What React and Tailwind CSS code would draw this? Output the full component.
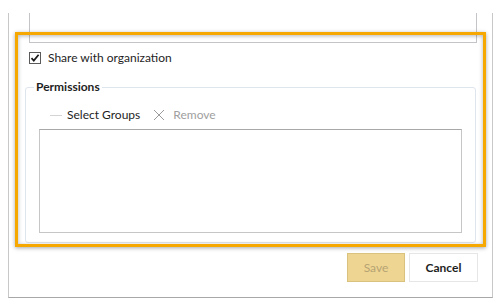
export default function App() {
  const font = { fontFamily: 'Lato, "Noto Sans", sans-serif' };
  return (
    <div className="relative w-[503px] h-[307px] bg-white overflow-hidden" style={font}>
      <div className="ml-[8px] mt-[13px] w-[485px] h-[285px] border-x border-b border-x-[#c8c8c8] border-b-[#a8a8a8] flex flex-col">
        <div className="ml-[20px] w-[448px] h-[30px] shrink-0 border-x border-b border-[#c4c4c8]" />
        <div className="flex items-center h-[16px] mt-[7px] pl-[20px] gap-[7px]">
          <svg width="12" height="12" viewBox="0 0 12 12" className="shrink-0">
            <rect x="0.5" y="0.5" width="11" height="11" fill="#fff" stroke="#5a5a5a" />
            <path d="M2.5 6.2 L4.8 8.6 L9.6 2.8" fill="none" stroke="#1a1a1a" strokeWidth="1.7" />
          </svg>
          <span className="text-[12px] leading-[16px] text-[#1e1e1e]">Share with organization</span>
        </div>
        <fieldset className="ml-[16px] mt-[12px] w-[451px] border border-[#dfe5ec] rounded-[3px] pl-[8px] pb-[9px]">
          <legend className="px-[2px] text-[12px] leading-[18px] font-bold text-[#1e1e1e]">Permissions</legend>
          <div className="flex items-center h-[18px] mt-[10px] pl-[16px] text-[12px] leading-[18px]">
            <span className="w-[12px] h-px bg-[#d4d4d4]" />
            <span className="ml-[5px] text-[#1e1e1e]">Select Groups</span>
            <svg width="12" height="12" viewBox="0 0 12 12" className="ml-[13px]">
              <path d="M1 1 L11 11 M11 1 L1 11" stroke="#9a9a9a" strokeWidth="1" fill="none" />
            </svg>
            <span className="ml-[8px] text-[#a0a0a0]">Remove</span>
          </div>
          <div className="ml-[5px] mt-[5px] w-[423px] h-[104px] border border-[#c6c6c6] border-t-[#a8a8a8]" />
        </fieldset>
        <div className="flex justify-end gap-[4px] mt-[10px] pr-[14px]">
          <div className="w-[58px] h-[29px] bg-[#efd592] border border-[#d9c27e] flex items-center justify-center text-[12px] text-[#b5a474]">Save</div>
          <div className="w-[69px] h-[29px] bg-white border border-[#e6e6e6] flex items-center justify-center text-[12px] font-bold text-[#1e1e1e]">Cancel</div>
        </div>
      </div>
      <div className="absolute left-[15px] top-[32px] w-[471px] h-[215px] border-[3px] border-[#f6a800] shadow-[0_1px_4px_rgba(0,0,0,0.35),inset_0_1px_4px_rgba(0,0,0,0.3)] pointer-events-none" />
    </div>
  );
}
